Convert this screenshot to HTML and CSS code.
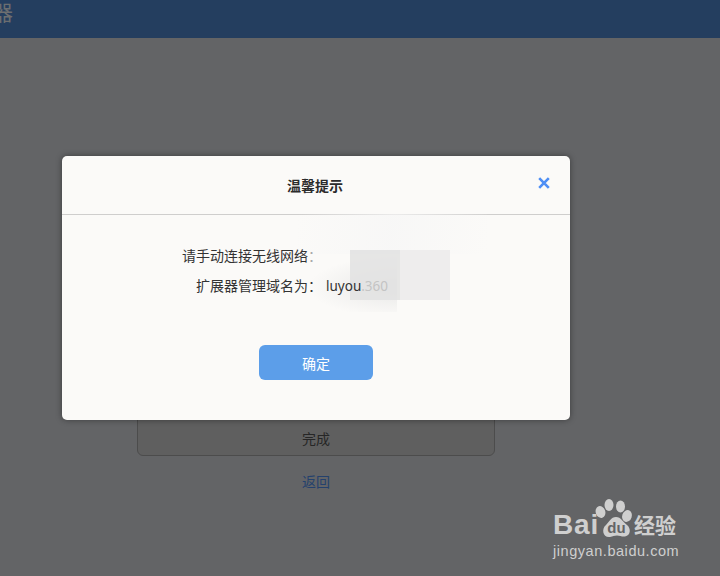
FILE: index.html
```html
<!DOCTYPE html>
<html lang="zh">
<head>
<meta charset="utf-8">
<title>温馨提示</title>
<link rel="stylesheet" href="styles.css">
</head>
<body>
<header class="topbar"><span class="brand">器</span></header>
<main class="page">
  <div class="finish">完成</div>
  <a class="back">返回</a>
</main>
<section class="modal">
  <div class="modal-head">
    <h2 class="modal-title">温馨提示</h2>
    <span class="close">
      <svg width="12" height="12" viewBox="0 0 12 12"><path d="M1.2 1.2L10.8 10.8M10.8 1.2L1.2 10.8" stroke="#4f8ff5" stroke-width="2.6" fill="none"/></svg>
    </span>
  </div>
  <div class="smear-soft"></div>
  <div class="smear-blob"></div>
  <div class="smear-mid"></div>
  <div class="smear-box"></div>
  <div class="modal-body">
    <div class="info-row"><span class="info-label">请手动连接无线网络<span class="faint-colon">：</span></span></div>
    <div class="info-row"><span class="info-label">扩展器管理域名为：</span><span class="info-value">luyou<span class="faint">.360</span></span></div>
    <button class="confirm">确定</button>
  </div>
</section>
<div class="watermark">
  <div class="wm-top">
    <span class="wm-bai">Bai</span>
    <svg class="wm-paw" width="40" height="41" viewBox="0 0 40 41">
      <ellipse cx="5.500" cy="14" rx="4.800" ry="6" fill="#cfcfcf" transform="rotate(-18 5.500 14)"/>
      <ellipse cx="14" cy="7" rx="4.500" ry="6" fill="#cfcfcf"/>
      <ellipse cx="25.500" cy="8.500" rx="4.500" ry="6" fill="#cfcfcf"/>
      <ellipse cx="32" cy="18" rx="4.800" ry="6" fill="#cfcfcf" transform="rotate(18 32 18)"/>
      <path d="M21 19C16 19 14 24 11 27C6 31 8 40 15 39C18 38.500 19 37.500 22 37.500C25 37.500 27 39 30 38.500C36 37.500 36 30 32 27C28 24 26 19 21 19Z" fill="#cfcfcf"/>
      <text x="21.500" y="35" text-anchor="middle" class="wm-du">du</text>
    </svg>
    <span class="wm-cn">经验</span>
  </div>
  <div class="wm-url">jingyan.baidu.com</div>
</div>
</body>
</html>
```
FILE: styles.css
```css
* { box-sizing: border-box; }
html, body { margin: 0; height: 100%; }
body {
  width: 720px;
  height: 576px;
  overflow: hidden;
  position: relative;
  background: #636466;
  font-family: "Liberation Sans", "Noto Sans CJK SC", sans-serif;
  font-size: 14px;
  color: #333;
}
.topbar {
  height: 38px;
  background: #243e5f;
  display: flex;
  align-items: flex-start;
  overflow: hidden;
}
.brand {
  margin: 0 0 0 -8px;
  font-size: 21px;
  line-height: 26px;
  color: #6c6e70;
}
.page {
  display: flex;
  flex-direction: column;
  align-items: center;
  padding: 322px 88px 0 0;
}
.finish {
  width: 358px;
  height: 96px;
  padding-top: 66px;
  text-align: center;
  line-height: 24px;
  border: 1px solid #4c4c4c;
  border-radius: 6px;
  background: #5f5f5f;
  color: #262626;
}
.back {
  margin-top: 14px;
  line-height: 24px;
  color: #24416d;
}
.modal {
  position: absolute;
  left: 62px;
  top: 156px;
  width: 508px;
  height: 264px;
  background: #fbfaf8;
  border-radius: 5px;
  box-shadow: 0 0 6px rgba(0, 0, 0, .4);
  overflow: hidden;
}
.modal-head {
  height: 59px;
  border-bottom: 1px solid #cfcecd;
  display: flex;
  align-items: center;
  justify-content: center;
  position: relative;
}
.modal-title {
  margin: 0 2px 0 0;
  font-size: 14px;
  font-weight: bold;
  color: #2b2b2b;
}
.close {
  position: absolute;
  left: 476px;
  top: 21px;
  width: 12px;
  height: 12px;
  display: flex;
}
.modal-body {
  display: flex;
  flex-direction: column;
  position: relative;
  padding-top: 26px;
}
.info-row {
  display: flex;
  height: 30px;
  line-height: 30px;
  color: #333;
}
.info-label { width: 260px; text-align: right; }
.info-value {
  margin-left: 4px;
  font-family: "Noto Sans", sans-serif;
  font-size: 13.500px;
  color: #333;
}
.faint { color: #c4c4c4; }
.faint-colon { color: #a8a8a8; }
.confirm {
  align-self: flex-start;
  margin: 44px 0 0 197px;
  width: 114px;
  height: 35px;
  padding: 0;
  border: 0;
  border-radius: 6px;
  background: #5c9ee9;
  color: #fff;
  font: inherit;
  font-size: 14px;
}
.smear-soft {
  position: absolute;
  left: 235px;
  top: 58px;
  width: 190px;
  height: 40px;
  background: linear-gradient(100deg, rgba(246, 246, 246, 0), rgba(246, 246, 246, .7) 50%, rgba(246, 246, 246, 0));
}
.smear-blob {
  position: absolute;
  left: 245px;
  top: 100px;
  width: 90px;
  height: 56px;
  background: radial-gradient(ellipse at 100% 55%, rgba(225, 225, 225, .75), rgba(225, 225, 225, 0) 70%);
}
.smear-mid {
  position: absolute;
  left: 288px;
  top: 94px;
  width: 50px;
  height: 50px;
  background: rgba(226, 226, 226, .85);
}
.smear-box {
  position: absolute;
  left: 338px;
  top: 94px;
  width: 50px;
  height: 50px;
  background: #eeeded;
}
.watermark {
  position: absolute;
  left: 553px;
  top: 498px;
  width: 130px;
  color: #cfcfcf;
}
.wm-top {
  display: flex;
  align-items: flex-end;
  height: 41px;
}
.wm-bai {
  font-family: "Liberation Sans", sans-serif;
  font-weight: bold;
  font-size: 28px;
  line-height: 30px;
  letter-spacing: .8px;
  margin-bottom: -1px;
}
.wm-paw {
  width: 40px;
  height: 41px;
  margin-left: -4px;
  flex: none;
}
.wm-du {
  font-family: "Liberation Sans", sans-serif;
  font-size: 15px;
  font-weight: bold;
  fill: #636466;
}
.wm-cn {
  font-size: 21px;
  line-height: 26px;
  font-weight: bold;
  margin-left: -1px;
}
.wm-url {
  font-family: "Liberation Sans", sans-serif;
  font-size: 14.500px;
  line-height: 18px;
  letter-spacing: .55px;
  margin-top: 3px;
  white-space: nowrap;
}
```
